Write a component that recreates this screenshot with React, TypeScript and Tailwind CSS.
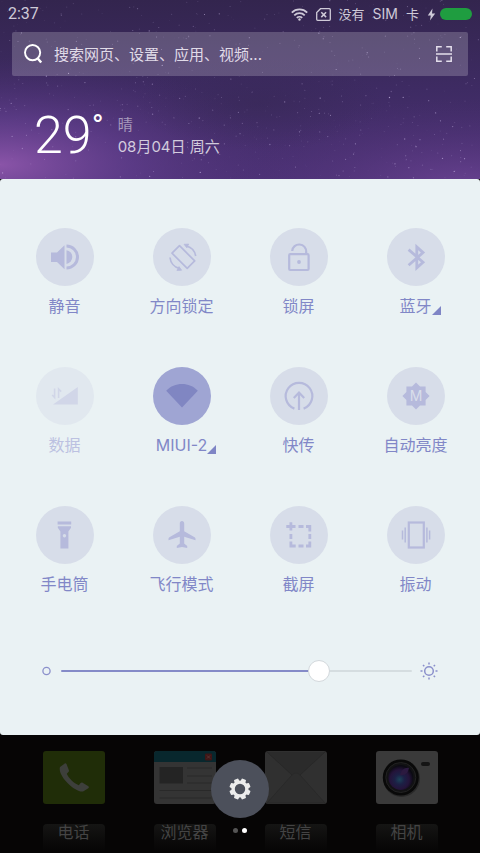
import { useState } from "react";
import type { ReactNode } from "react";

interface Toggle {
  id: string;
  label: string;
  icon: ReactNode;
  disabled?: boolean;
  expandable?: boolean;
}

interface DockApp {
  name: string;
  art: ReactNode;
}

// small seeded generator so the sky looks the same on every render
function makeStars(count: number) {
  let seed = 7;
  const next = () => {
    seed = (seed * 16807) % 2147483647;
    return seed / 2147483647;
  };
  return Array.from({ length: count }, () => ({
    x: next() * 480,
    y: next() * 180,
    r: 0.3 + next() * 0.4,
    o: 0.12 + next() * next() * 0.6,
  }));
}

const STARS = makeStars(620);

const TOGGLES: Toggle[] = [
  {
    id: "mute",
    label: "静音",
    icon: (
      <>
        <path d="M15 24.5h6l7.5-7.2v24L21 34h-6z" fill="currentColor" />
        <path d="M30.5 22.2a7 7 0 0 1 0 13.8z" fill="currentColor" />
        <path d="M30.5 18a11 11 0 0 1 0 22" fill="none" stroke="currentColor" strokeWidth="3" />
      </>
    ),
  },
  {
    id: "rotation",
    label: "方向锁定",
    icon: (
      <g fill="none" stroke="currentColor" strokeWidth="1.7" strokeLinejoin="round">
        <path d="M19 25.2 26.5 17.7 41.7 32.9 34.2 40.4z" />
        <path d="M33 18a12.5 12.5 0 0 1 9.7 10" />
        <path d="M17 29.5A12.5 12.5 0 0 0 26.5 40.5" />
        <path d="M31 16.3l4.7-.2-1.9 3.6zM28.6 42.2l-4.7.2 2.1-3.8z" fill="currentColor" strokeWidth="0.8" />
      </g>
    ),
  },
  {
    id: "lock",
    label: "锁屏",
    icon: (
      <>
        <g fill="none" stroke="currentColor" strokeWidth="2.2">
          <rect x="19.2" y="26.2" width="19.4" height="15.8" rx="1" />
          <path d="M22.2 23a7 7 0 0 1 14 1v2" />
        </g>
        <circle cx="29" cy="34" r="1.9" fill="currentColor" />
      </>
    ),
  },
  {
    id: "bluetooth",
    label: "蓝牙",
    expandable: true,
    icon: (
      <path
        d="M21.6 21.6 36 34.2 29.8 39.8V19l6.2 5.6L21.6 37.2"
        fill="none"
        stroke="currentColor"
        strokeWidth="2.8"
      />
    ),
  },
  {
    id: "data",
    label: "数据",
    disabled: true,
    icon: (
      <>
        <path d="M17 37.4 41.8 20v17.4z" fill="currentColor" />
        <path
          d="M18.6 21.5V30.5L16.2 28M22.6 31V22l2.6 2.6"
          fill="none"
          stroke="currentColor"
          strokeWidth="1.6"
        />
      </>
    ),
  },
  {
    id: "wifi",
    label: "MIUI-2",
    expandable: true,
    icon: <path d="M13.2 23.8C17.5 19 23 16.9 29 16.9s11.5 2.1 15.8 6.9L29 40.4z" fill="currentColor" />,
  },
  {
    id: "drop",
    label: "快传",
    icon: (
      <g fill="none" stroke="currentColor" strokeWidth="2.2">
        <path d="M24.4 41.6a13.3 13.3 0 1 1 9.2 0" />
        <path d="M29 43V26M23.8 31l5.2-5.4 5.2 5.4" />
      </g>
    ),
  },
  {
    id: "auto-brightness",
    label: "自动亮度",
    icon: (
      <>
        <path
          d="M29 15.4 33 19.6H38.6V25L42.6 29 38.6 33V38.6H33L29 42.6 25 38.6H19.4V33L15.4 29 19.4 25V19.6H25z"
          fill="currentColor"
        />
        <text x="29" y="34" fontSize="14" textAnchor="middle" fill="#d9deea">
          M
        </text>
      </>
    ),
  },
  {
    id: "torch",
    label: "手电筒",
    icon: (
      <path
        fillRule="evenodd"
        fill="currentColor"
        d="M21.6 15.6h13.6v2.8H21.6zM21.8 20.2h13.2v1.6l-2.6 3.8v16.8h-8V25.6l-2.6-3.8zM28.4 28a1.7 1.7 0 1 0 .1 0z"
      />
    ),
  },
  {
    id: "airplane",
    label: "飞行模式",
    icon: (
      <path
        fill="currentColor"
        d="M29 15c1.4 0 2.2 1 2.2 2.5v7.7l10.4 6c.7.5.9 1 .9 1.6v1.5l-11.3-3.6v6.7l3 2.6v2l-5.2-1-5.2 1v-2l3-2.6v-6.7l-11.3 3.6v-1.5c0-.7.3-1.2.9-1.6l10.4-6v-7.7C26.8 16 27.6 15 29 15z"
      />
    ),
  },
  {
    id: "screenshot",
    label: "截屏",
    icon: (
      <path
        d="M16.3 20.5h9.2M20.9 16.3v8.2M28.5 20.5h5M36 20.5h5.2M39.8 20v5.5M20.9 28v5M39.8 28v5M20.9 35.5v6M20.5 40h5.2M28.5 40h5M36 40h5.2M39.8 35.5v5"
        fill="none"
        stroke="currentColor"
        strokeWidth="2.8"
      />
    ),
  },
  {
    id: "vibrate",
    label: "振动",
    icon: (
      <g fill="none" stroke="currentColor">
        <rect x="21.8" y="16.5" width="15" height="25" strokeWidth="2.2" />
        <path d="M18.2 21.5v15M39.9 21.5v15M15.5 24.5v9M42.6 24.5v9" strokeWidth="1.5" />
      </g>
    ),
  },
];

const DOCK: DockApp[] = [
  {
    name: "电话",
    art: (
      <>
        <rect width="62" height="53" rx="3" fill="#202d08" />
        <path
          d="M17 16c-1.2 3 1 9.5 7.5 16s13 9.6 16 8.3l4.8-3c.8-.6.7-1.5.1-2l-5.8-3.6c-.8-.4-1.5-.2-2 .3l-1.8 2.2c-5-2-10-7-12-11.5l1.8-2c.5-.6.5-1 .2-1.8L23.5 13c-.6-.9-1.4-.8-2-.3z"
          fill="#3d3f3b"
        />
      </>
    ),
  },
  {
    name: "浏览器",
    art: (
      <>
        <rect width="62" height="53" rx="3" fill="#343434" />
        <path d="M3 0h56a3 3 0 0 1 3 3v8H0V3a3 3 0 0 1 3-3z" fill="#08272d" />
        <rect x="51" y="2.5" width="7" height="7" rx="1" fill="#3f1616" />
        <path d="M53 4.5l3 3M56 4.5l-3 3" stroke="#5a3333" />
        <rect x="5.5" y="16" width="23.5" height="16.5" fill="#242424" />
        <path d="M33 17h25M33 25h25M33 32h25M5.5 39.5h52M5.5 47h52" stroke="#292929" />
      </>
    ),
  },
  {
    name: "短信",
    art: (
      <>
        <rect width="62" height="53" rx="3" fill="#303030" />
        <path d="M2 1h58L35 24q-4-4-8 0z" fill="#2b2b2b" />
        <path d="M2 52l25-28q4-4 8 0l25 28z" fill="#2d2d2d" stroke="#292929" />
        <path d="M2 1l25 23M60 1 35 24" stroke="#282828" />
      </>
    ),
  },
  {
    name: "相机",
    art: (
      <>
        <defs>
          <radialGradient id="lens" cx="45%" cy="58%" r="55%">
            <stop offset="0%" stopColor="#1b4358" />
            <stop offset="35%" stopColor="#1c2045" />
            <stop offset="70%" stopColor="#24143a" />
            <stop offset="100%" stopColor="#0b0a12" />
          </radialGradient>
        </defs>
        <rect width="62" height="53" rx="3" fill="#3a3a3a" />
        <circle cx="25.5" cy="27.5" r="18.5" fill="#292929" />
        <circle cx="24.8" cy="26.5" r="18" fill="#090909" />
        <circle cx="24.8" cy="26.5" r="15" fill="#121214" stroke="#222" />
        <circle cx="24.8" cy="26.5" r="12.5" fill="url(#lens)" />
        <path d="M24 24c1-5 5-8 9-7-1 5-4 8-9 7z" fill="#2c1a40" />
        <rect x="45" y="11" width="9" height="4" rx="2" fill="#151515" />
      </>
    ),
  },
];

function Sky() {
  return (
    <svg
      viewBox="0 0 480 180"
      preserveAspectRatio="none"
      className="absolute inset-0 h-full w-full"
      aria-hidden="true"
    >
      <defs>
        <linearGradient id="base" x1="0" y1="0" x2="0" y2="1">
          <stop offset="0%" stopColor="#33254e" />
          <stop offset="50%" stopColor="#3e2b63" />
          <stop offset="100%" stopColor="#4d3277" />
        </linearGradient>
        <radialGradient id="glowLeft" cx="0%" cy="92%" r="60%">
          <stop offset="0%" stopColor="#8a54a8" />
          <stop offset="45%" stopColor="#644090" stopOpacity="0.65" />
          <stop offset="100%" stopColor="#4a2f70" stopOpacity="0" />
        </radialGradient>
        <radialGradient id="glowRight" cx="97%" cy="105%" r="50%">
          <stop offset="0%" stopColor="#6c4494" stopOpacity="0.9" />
          <stop offset="100%" stopColor="#4a2f70" stopOpacity="0" />
        </radialGradient>
        <radialGradient id="shade" cx="54%" cy="58%" r="26%">
          <stop offset="0%" stopColor="#32264c" stopOpacity="0.4" />
          <stop offset="100%" stopColor="#32264c" stopOpacity="0" />
        </radialGradient>
      </defs>
      <rect width="480" height="180" fill="url(#base)" />
      <rect width="480" height="180" fill="url(#glowLeft)" />
      <rect width="480" height="180" fill="url(#glowRight)" />
      <rect width="480" height="180" fill="url(#shade)" />
      {STARS.map((s, i) => (
        <circle key={i} cx={s.x} cy={s.y} r={s.r} fill="#d9c8f5" opacity={s.o} />
      ))}
    </svg>
  );
}

function StatusBar() {
  return (
    <div className="flex h-7 items-center justify-between px-2 text-[#cfcad8]">
      <span className="font-['Roboto',sans-serif] text-base leading-7">2:37</span>
      <div className="flex items-center gap-2 text-sm leading-7">
        <svg width="17" height="13" viewBox="0 0 17 13" fill="none" stroke="currentColor" strokeWidth="1.8">
          <path d="M.8 4.6a11 11 0 0 1 15.4 0M3.3 7.3a7.4 7.4 0 0 1 10.4 0M5.8 9.9a3.9 3.9 0 0 1 5.4 0" />
          <circle cx="8.5" cy="11.5" r="1.2" fill="currentColor" stroke="none" />
        </svg>
        <svg width="15" height="13" viewBox="0 0 15 13" fill="none" stroke="currentColor" strokeWidth="1.3">
          <path d="M4.5.7h8.8a1 1 0 0 1 1 1v9.6a1 1 0 0 1-1 1H1.7a1 1 0 0 1-1-1V4.5z" />
          <path d="M5.3 4.3l4.8 4.8M10.1 4.3 5.3 9.1" strokeWidth="1.5" />
        </svg>
        <span className="text-[13px]">没有</span>
        <span>SIM</span>
        <span className="text-[13px]">卡</span>
        <div className="flex items-center gap-1">
          <svg width="9" height="13" viewBox="0 0 9 13" fill="currentColor">
            <path d="M5.5.5.8 7.4h3L3 12.5 8.2 5.5H5z" />
          </svg>
          <div className="h-3 w-8 rounded-full bg-[#1f9d40]" />
        </div>
      </div>
    </div>
  );
}

function SearchBar() {
  return (
    <div className="mx-3 mt-1 flex h-11 items-center gap-2 rounded-xs bg-white/20 px-3 text-white">
      <svg width="20" height="20" viewBox="0 0 20 20" fill="none" stroke="currentColor" strokeWidth="1.9">
        <circle cx="8.6" cy="8.6" r="7.6" />
        <path d="M13.6 14.2l3.6 4.3" strokeWidth="2.4" />
      </svg>
      <input
        type="text"
        aria-label="搜索"
        placeholder="搜索网页、设置、应用、视频..."
        className="h-full min-w-0 flex-1 bg-transparent pl-0.5 text-[15px] outline-none placeholder:text-[#e0dbe8]"
      />
      <button type="button" aria-label="扫一扫" className="flex h-6 w-6 items-center justify-center">
        <svg width="16" height="16" viewBox="0 0 16 16" fill="none" stroke="#e4dfec" strokeWidth="1.5">
          <path d="M.8 5.5V.8h5M10.2.8h5v4.7M.8 10.5v4.7h5M10.2 15.2h5v-4.7M0 8h16" />
        </svg>
      </button>
    </div>
  );
}

function Weather() {
  return (
    <div className="mt-8 flex h-14 items-center gap-3.5 pl-[34px] text-white">
      <div className="flex font-['Roboto',sans-serif] text-[52px] leading-14 font-light">
        <span>29</span>
        <span className="text-[32px] leading-9 font-normal">°</span>
      </div>
      <div className="text-[15px] leading-[22px] font-normal">
        <p className="text-white/50">晴</p>
        <p className="text-white/75">08月04日 周六</p>
      </div>
    </div>
  );
}

interface TileProps {
  toggle: Toggle;
  active: boolean;
  onToggle: () => void;
}

function Tile({ toggle, active, onToggle }: TileProps) {
  const circleColor = toggle.disabled
    ? "bg-[#e1e8ef] text-[#d1d6e8]"
    : active
      ? "bg-[#9fa5d3] text-[#8086c2]"
      : "bg-[#d7dde9] text-[#b6badc]";

  return (
    <button
      type="button"
      aria-pressed={active}
      disabled={toggle.disabled}
      onClick={onToggle}
      className="flex flex-col items-center gap-2"
    >
      <span className={`h-[58px] w-[58px] rounded-full ${circleColor}`}>
        <svg viewBox="0 0 58 58" className="h-full w-full" aria-hidden="true">
          {toggle.icon}
        </svg>
      </span>
      <span
        className={`relative text-base leading-[25px] whitespace-nowrap ${toggle.disabled ? "text-[#bcc1e1]" : "text-[#8187c7]"}`}
      >
        {toggle.label}
        {toggle.expandable && (
          <svg
            width="9"
            height="9"
            viewBox="0 0 9 9"
            className="absolute bottom-1 left-full"
            aria-hidden="true"
          >
            <path d="M9 0v9H0z" fill="#7f85c5" />
          </svg>
        )}
      </span>
    </button>
  );
}

function Brightness() {
  const [level, setLevel] = useState(75);

  return (
    <div className="mt-[62px] flex h-6 items-center gap-2 pr-[42px] pl-[35px] text-[#8b90cb]">
      <svg width="18" height="18" viewBox="0 0 18 18" fill="none" stroke="currentColor" strokeWidth="1.3">
        <circle cx="11.5" cy="9" r="3.6" />
      </svg>
      <input
        type="range"
        min={0}
        max={100}
        value={level}
        aria-label="亮度"
        onChange={(e) => setLevel(Number(e.target.value))}
        className="h-0.5 min-w-0 flex-1 appearance-none rounded-full outline-none [&::-webkit-slider-thumb]:h-[22px] [&::-webkit-slider-thumb]:w-[22px] [&::-webkit-slider-thumb]:appearance-none [&::-webkit-slider-thumb]:rounded-full [&::-webkit-slider-thumb]:border [&::-webkit-slider-thumb]:border-[#d3d8dc] [&::-webkit-slider-thumb]:bg-white"
        style={{ background: `linear-gradient(to right, #858bc8 ${level}%, #d5dde0 ${level}%)` }}
      />
      <svg width="18" height="18" viewBox="0 0 18 18" fill="none" stroke="currentColor" strokeWidth="1.5">
        <circle cx="9" cy="9" r="4.3" />
        <path d="M9 .5v2M9 15.5v2M.5 9h2M15.5 9h2M3 3l1.3 1.3M13.7 13.7 15 15M3 15l1.3-1.3M13.7 4.3 15 3" />
      </svg>
    </div>
  );
}

function Dock() {
  return (
    <footer className="relative flex-1 overflow-hidden bg-[#060505] pt-4">
      <div className="grid grid-cols-4 px-[18px]">
        {DOCK.map((app) => (
          <a key={app.name} href="#" className="flex flex-col items-center gap-5">
            <svg width="62" height="53" viewBox="0 0 62 53" aria-hidden="true">
              {app.art}
            </svg>
            <span className="h-7 w-[62px] rounded-t-sm bg-linear-to-b from-[#151514] to-[#060505] text-center text-base leading-4 whitespace-nowrap text-[#444]">
              {app.name}
            </span>
          </a>
        ))}
      </div>

      <button
        type="button"
        aria-label="设置"
        className="absolute top-[25px] left-1/2 flex h-[58px] w-[58px] -translate-x-1/2 items-center justify-center rounded-full bg-[#4c505b] text-[#ececec]"
      >
        <svg width="22" height="22" viewBox="-11 -11 22 22" fill="currentColor">
          {[0, 45, 90, 135, 180, 225, 270, 315].map((angle) => (
            <rect key={angle} x="-2.4" y="-10.6" width="4.8" height="4.6" rx="1" transform={`rotate(${angle + 22.5})`} />
          ))}
          <circle r="6.9" fill="none" stroke="currentColor" strokeWidth="3.4" />
        </svg>
      </button>

      <div className="absolute top-[93px] left-1/2 flex -translate-x-1/2 gap-1">
        <span className="h-[5px] w-[5px] rounded-full bg-[#555]" />
        <span className="h-[5px] w-[5px] rounded-full bg-white" />
      </div>
    </footer>
  );
}

export default function App() {
  const [active, setActive] = useState<string[]>(["wifi"]);

  const toggle = (id: string) => {
    setActive((prev) => (prev.includes(id) ? prev.filter((item) => item !== id) : [...prev, id]));
  };

  return (
    <div className="flex min-h-screen flex-col bg-[#060505] font-['Inter','Noto_Sans_CJK_SC',sans-serif]">
      <header className="relative pb-[15px]">
        <Sky />
        <div className="relative">
          <StatusBar />
          <SearchBar />
          <Weather />
        </div>
      </header>

      <main className="rounded-[3px] bg-[#eaf2f4] pt-[49px] pb-[52px]">
        <div className="grid grid-cols-4 gap-y-12 px-1.5">
          {TOGGLES.map((item) => (
            <Tile
              key={item.id}
              toggle={item}
              active={active.includes(item.id)}
              onToggle={() => toggle(item.id)}
            />
          ))}
        </div>
        <Brightness />
      </main>

      <Dock />
    </div>
  );
}
